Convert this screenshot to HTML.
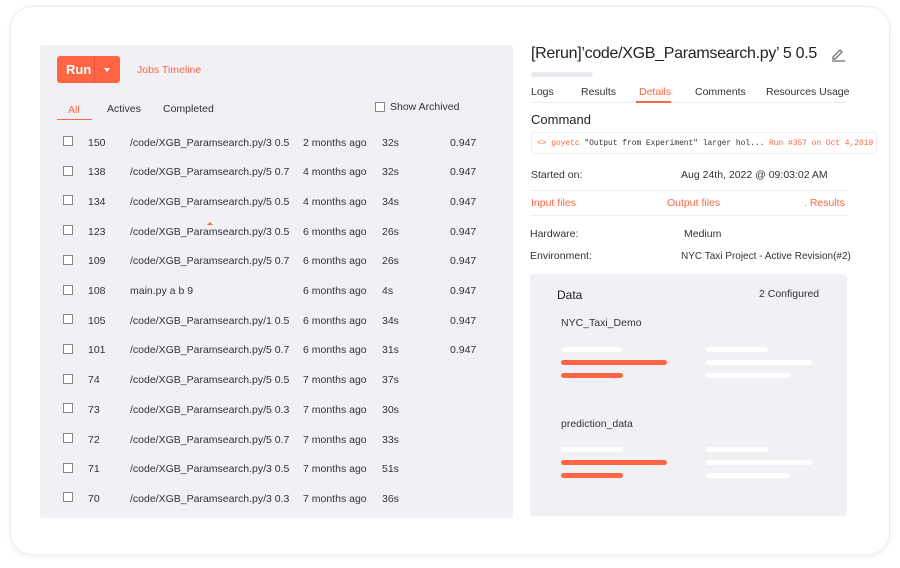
<!DOCTYPE html>
<html><head><meta charset="utf-8"><style>
*{margin:0;padding:0;box-sizing:border-box}
body{width:900px;height:568px;background:#fff;font-family:"Liberation Sans",sans-serif;position:relative;overflow:hidden;color:#333}
.card{position:absolute;left:10px;top:6px;width:880px;height:549px;border-radius:22px;border:1px solid #ececec;box-shadow:0 2px 6px rgba(0,0,0,.06);background:#fff}
.lp{position:absolute;left:40px;top:45px;width:473px;height:473px;background:#f0f0f5;border-radius:3px}
.a{position:absolute;white-space:nowrap}
.f11{font-size:10.5px}
.or{color:#ff6542}
.cb{position:absolute;width:10px;height:10px;border:1px solid #888;background:#fff}
.bar{position:absolute;height:5px;border-radius:3px;background:#fff}
.ob{background:#ff6542}
.line{position:absolute;height:1px;background:#eee}
</style></head><body>
<div class="card"></div>
<div class="lp"></div>
<div class="a" style="left:57px;top:56px;width:63px;height:27px;background:#ff6542;border-radius:3px"></div>
<div class="a" style="left:94px;top:56px;width:1px;height:27px;background:#e8553a"></div>
<div class="a" style="left:66px;top:62px;color:#fff;font-size:13px;font-weight:bold">Run</div>
<div class="a" style="left:104px;top:68px;width:0;height:0;border-left:3px solid transparent;border-right:3px solid transparent;border-top:4px solid #fff"></div>
<div class="a or f11" style="left:137px;top:64px">Jobs Timeline</div>
<div class="a or f11" style="left:68px;top:104px">All</div>
<div class="a" style="left:57px;top:119px;width:35px;height:1px;background:#ff6542"></div>
<div class="a f11" style="left:107px;top:103px">Actives</div>
<div class="a f11" style="left:163px;top:103px">Completed</div>
<div class="cb" style="left:375px;top:102px"></div>
<div class="a f11" style="left:390px;top:101px">Show Archived</div>
<div id="rows"></div>
<script>
var d=[["150","/code/XGB_Paramsearch.py/3 0.5","2 months ago","32s","0.947"],["138","/code/XGB_Paramsearch.py/5 0.7","4 months ago","32s","0.947"],["134","/code/XGB_Paramsearch.py/5 0.5","4 months ago","34s","0.947"],["123","/code/XGB_Paramsearch.py/3 0.5","6 months ago","26s","0.947"],["109","/code/XGB_Paramsearch.py/5 0.7","6 months ago","26s","0.947"],["108","main.py a b 9","6 months ago","4s","0.947"],["105","/code/XGB_Paramsearch.py/1 0.5","6 months ago","34s","0.947"],["101","/code/XGB_Paramsearch.py/5 0.7","6 months ago","31s","0.947"],["74","/code/XGB_Paramsearch.py/5 0.5","7 months ago","37s",""],["73","/code/XGB_Paramsearch.py/5 0.3","7 months ago","30s",""],["72","/code/XGB_Paramsearch.py/5 0.7","7 months ago","33s",""],["71","/code/XGB_Paramsearch.py/3 0.5","7 months ago","51s",""],["70","/code/XGB_Paramsearch.py/3 0.3","7 months ago","36s",""]];
var h="";d.forEach(function(r,i){var y=142+i*29.7;h+='<div class="cb" style="left:63px;top:'+(y-6)+'px"></div>';var xs=[88,130,303,382,450];r.forEach(function(t,j){h+='<div class="a f11" style="left:'+xs[j]+'px;top:'+(y-5.5)+'px">'+t+'</div>'})});
document.getElementById('rows').innerHTML=h;
</script>
<div class="a" style="left:207px;top:222px;width:0;height:0;border-left:3px solid transparent;border-right:3px solid transparent;border-bottom:3px solid #ff6542"></div>
<div class="a" style="left:531px;top:45px;font-size:16px;letter-spacing:-0.3px;color:#222">[Rerun]’code/XGB_Paramsearch.py’ 5 0.5</div>
<svg class="a" style="left:830px;top:46px" width="16" height="16" viewBox="0 0 16 16"><path d="M3 11 L10 4 L12 6 L5 13 L3 13 Z" fill="none" stroke="#666" stroke-width="1.2"/><path d="M2 15 H15" stroke="#666" stroke-width="1.2"/></svg>
<div class="a" style="left:531px;top:72px;width:62px;height:5px;border-radius:3px;background:#eaeaef"></div>
<div class="a f11" style="left:531px;top:86px">Logs</div>
<div class="a f11" style="left:581px;top:86px">Results</div>
<div class="a f11 or" style="left:639px;top:86px">Details</div>
<div class="a f11" style="left:695px;top:86px">Comments</div>
<div class="a f11" style="left:766px;top:86px">Resources Usage</div>
<div class="line" style="left:531px;top:102px;width:316px"></div>
<div class="a" style="left:636px;top:101px;width:35px;height:2px;background:#ff6542"></div>
<div class="a" style="left:531px;top:112px;font-size:13px;color:#222">Command</div>
<div class="a" style="left:531px;top:132px;width:346px;height:22px;border:1px solid #f0f0f0;border-radius:2px"></div>
<div class="a" style="left:537px;top:139px;font-family:'Liberation Mono',monospace;font-size:7.9px;color:#333"><span class="or">&lt;&gt; goyetc</span> "Output from Experiment" larger hol... <span class="or">Run #357 on Oct 4,2019</span></div>
<div class="a f11" style="left:531px;top:169px">Started on:</div>
<div class="a f11" style="left:681px;top:169px">Aug 24th, 2022 @ 09:03:02 AM</div>
<div class="line" style="left:531px;top:190px;width:316px"></div>
<div class="a f11 or" style="left:531px;top:197px">Input files</div>
<div class="a f11 or" style="left:667px;top:197px">Output files</div>
<div class="a f11 or" style="left:804px;top:197px">. Results</div>
<div class="line" style="left:531px;top:215px;width:316px"></div>
<div class="a f11" style="left:530px;top:228px">Hardware:</div>
<div class="a f11" style="left:684px;top:228px">Medium</div>
<div class="a f11" style="left:530px;top:250px">Environment:</div>
<div class="a" style="left:681px;top:251px;font-size:10px">NYC Taxi Project - Active Revision(#2)</div>
<div class="a" style="left:530px;top:274px;width:317px;height:242px;background:#f0f0f5;border-radius:3px"></div>
<div class="a" style="left:557px;top:288px;font-size:12px;color:#222">Data</div>
<div class="a f11" style="left:759px;top:288px">2 Configured</div>
<div class="a f11" style="left:561px;top:317px">NYC_Taxi_Demo</div>
<div class="a f11" style="left:561px;top:418px">prediction_data</div>
<div class="bar" style="left:561px;top:347px;width:62px"></div>
<div class="bar ob" style="left:561px;top:360px;width:106px"></div>
<div class="bar ob" style="left:561px;top:373px;width:62px"></div>
<div class="bar" style="left:706px;top:347px;width:62px"></div>
<div class="bar" style="left:706px;top:360px;width:106px"></div>
<div class="bar" style="left:706px;top:373px;width:84px"></div>
<div class="bar" style="left:561px;top:447px;width:62px"></div>
<div class="bar ob" style="left:561px;top:460px;width:106px"></div>
<div class="bar ob" style="left:561px;top:473px;width:62px"></div>
<div class="bar" style="left:706px;top:447px;width:62px"></div>
<div class="bar" style="left:706px;top:460px;width:106px"></div>
<div class="bar" style="left:706px;top:473px;width:84px"></div>
</body></html>
